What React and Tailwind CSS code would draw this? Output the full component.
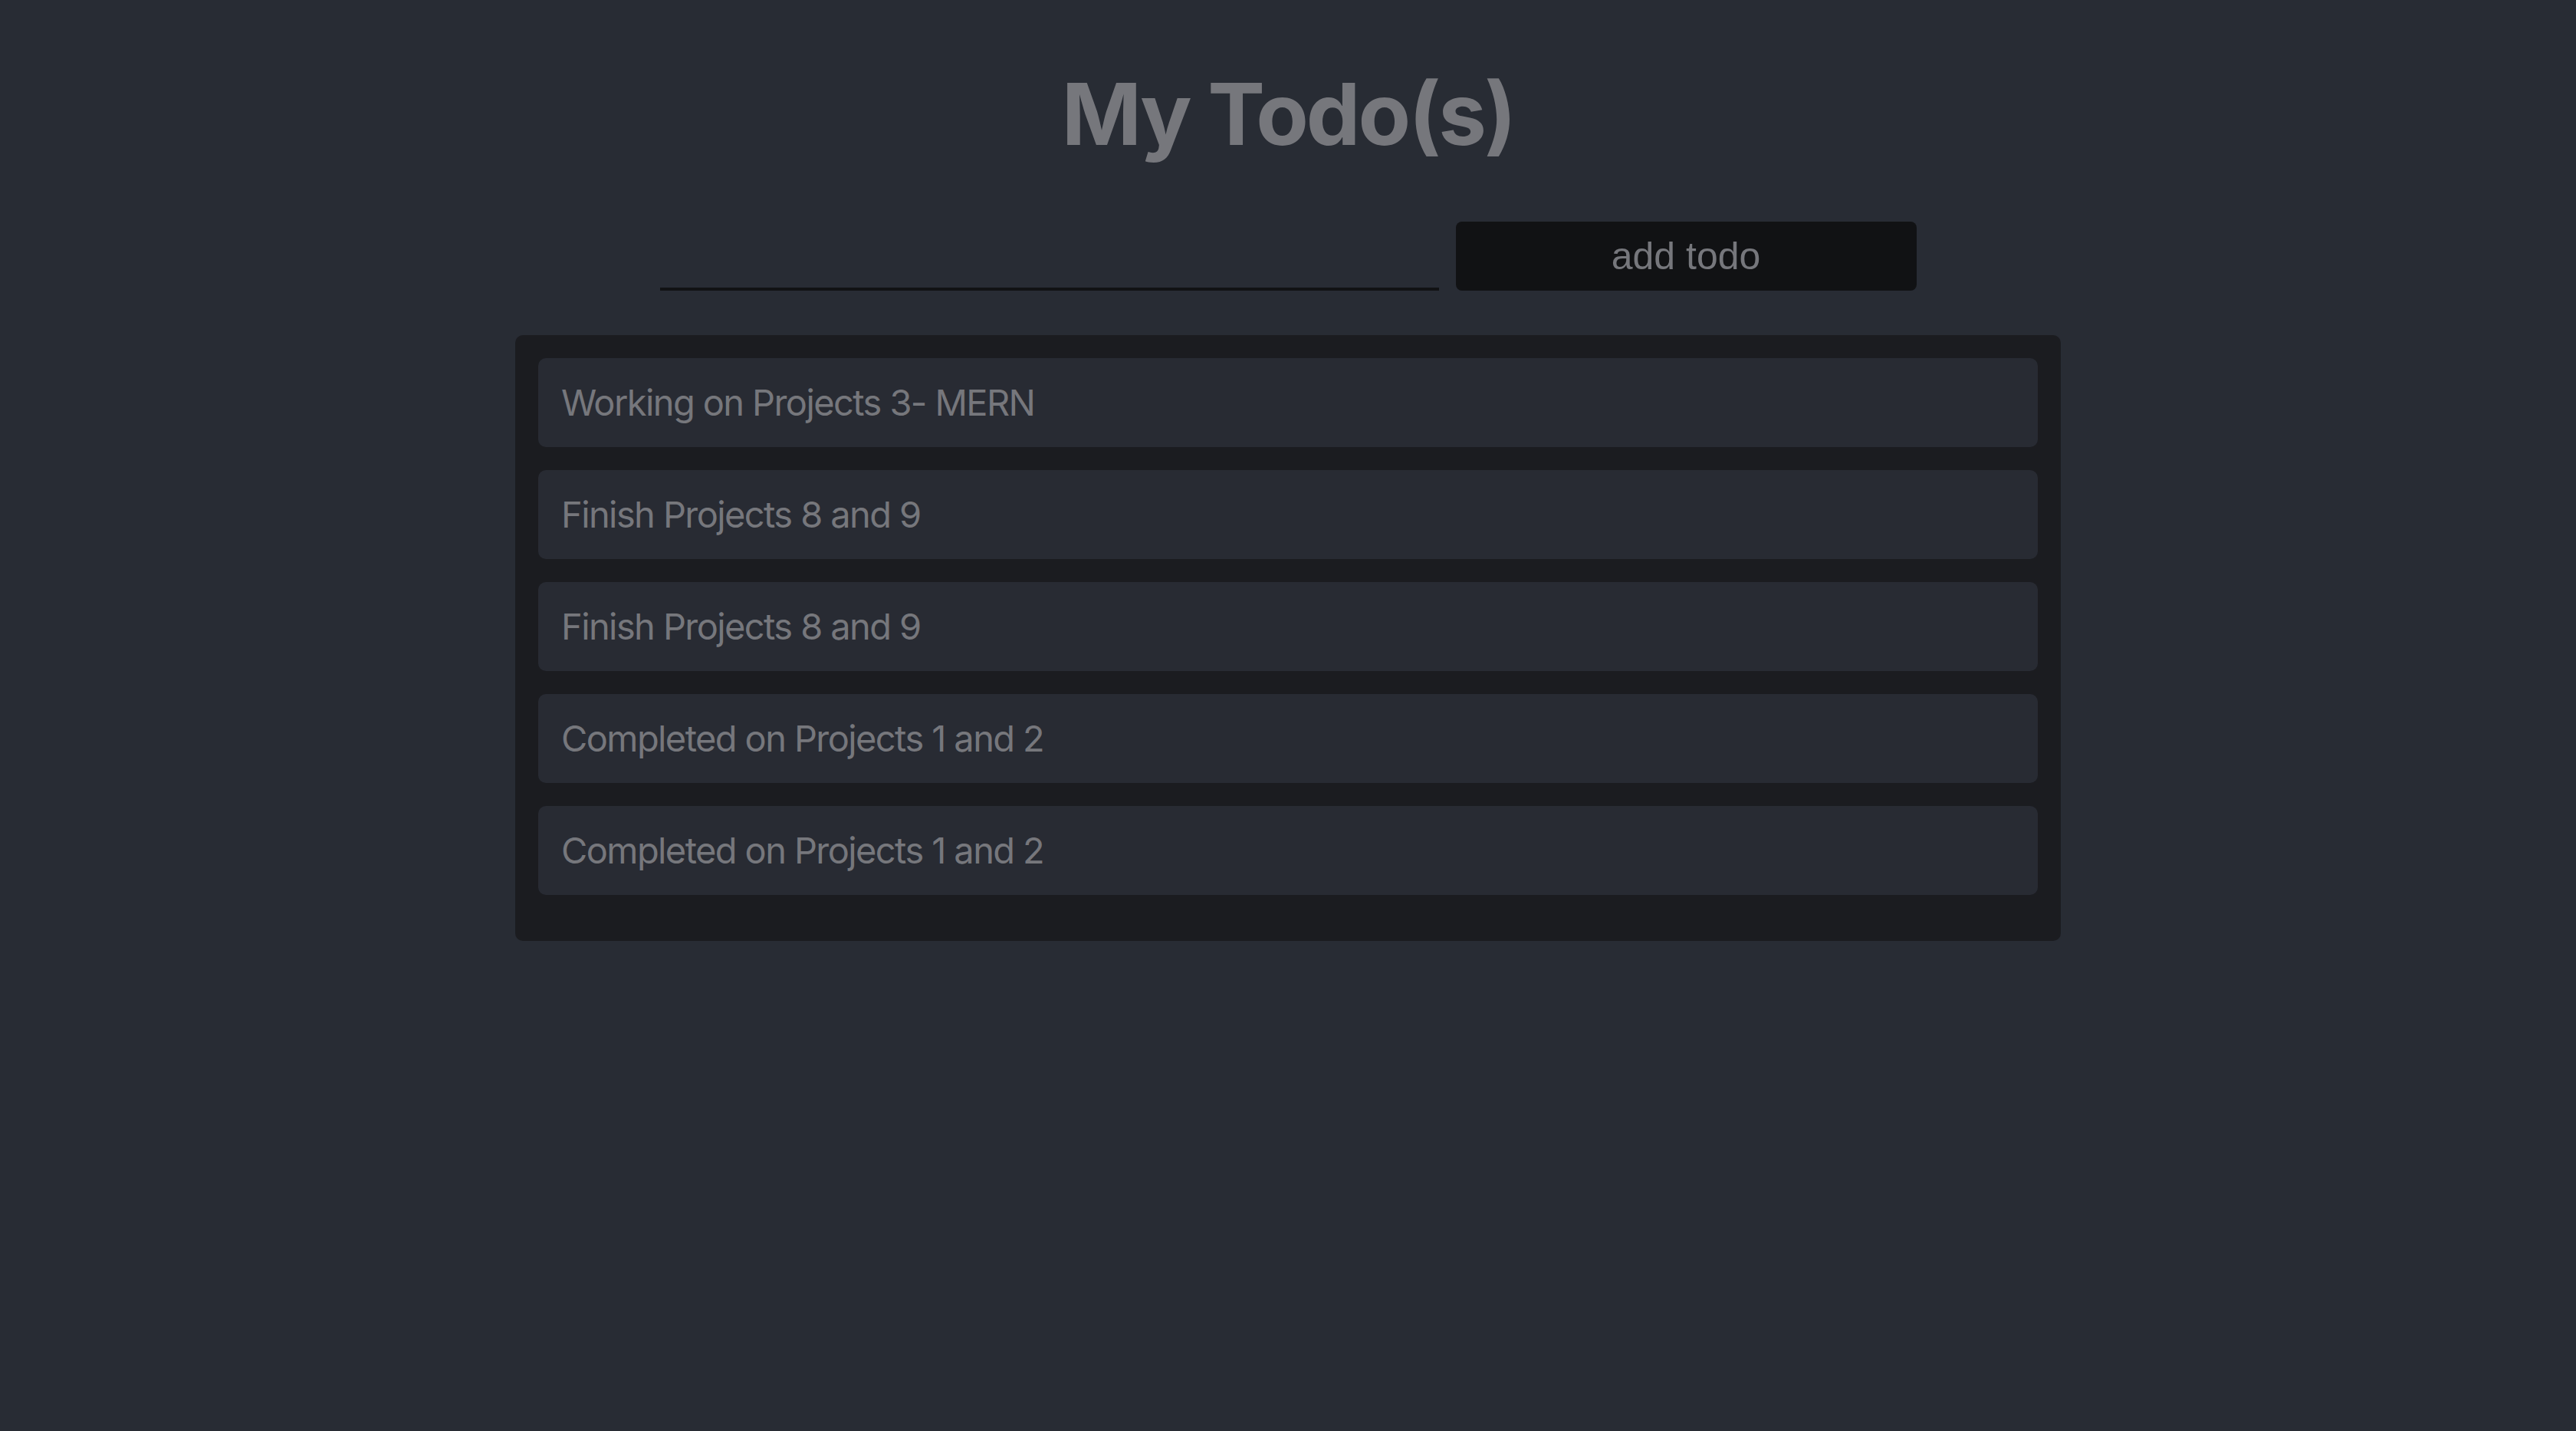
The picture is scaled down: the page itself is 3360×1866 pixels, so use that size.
import React from "react";

const todos = [
  "Working on Projects 3- MERN",
  "Finish Projects 8 and 9",
  "Finish Projects 8 and 9",
  "Completed on Projects 1 and 2",
  "Completed on Projects 1 and 2",
];

export default function App() {
  return (
    <div className="min-h-screen w-full bg-[#282c34] flex flex-col items-center pt-[80px]" style={{ fontFamily: "Inter, 'Noto Sans', sans-serif" }}>
      <h1 className="text-[112px] leading-[136px] font-bold text-[#76777c] tracking-[-3px]">My Todo(s)</h1>
      <div className="mt-[73px] flex items-end gap-[22px]">
        <input
          type="text"
          className="w-[1016px] h-[90px] bg-transparent border-0 border-b-[4px] border-[#111214] outline-none text-[48px] text-[#76777c]"
        />
        <button
          className="w-[601px] h-[90px] rounded-[8px] bg-[#111214] text-[#76777c] text-[50px]"
          style={{ fontFamily: "'Liberation Sans', Arial, sans-serif" }}
        >
          add todo
        </button>
      </div>
      <div className="mt-[58px] w-[2016px] bg-[#1b1c20] rounded-[10px] pt-[30px] px-[30px] pb-[30px]">
        {todos.map((t, i) => (
          <div
            key={i}
            className="h-[116px] mb-[30px] rounded-[10px] bg-[#282b33] flex items-center px-[30px] text-[47px] tracking-[-1.6px] text-[#76777c]"
          >
            {t}
          </div>
        ))}
      </div>
    </div>
  );
}
